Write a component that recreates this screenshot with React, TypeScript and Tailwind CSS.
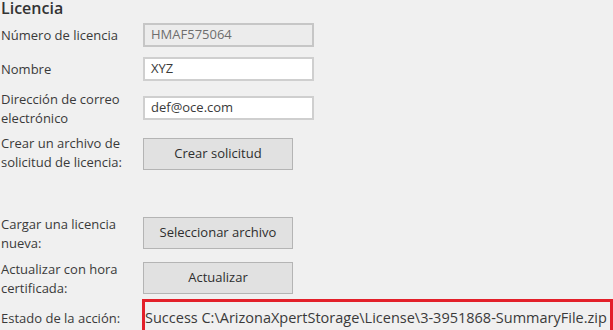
import React from 'react'

const font = { fontFamily: '"Open Sans", "Noto Sans", sans-serif' }

function Label({ lines }: { lines: string[] }) {
  return (
    <div className="w-[143px] shrink-0 pl-px text-[13px] leading-[19px] text-[#3a3a3a]">
      {lines.map((l) => (
        <div key={l}>{l}</div>
      ))}
    </div>
  )
}

function Field({ value, disabled = false }: { value: string; disabled?: boolean }) {
  return (
    <div
      className={[
        'flex h-[24px] w-[171px] items-center px-[6px] text-[13px]',
        'border-2',
        disabled
          ? 'border-[#c6c6c6] bg-[#ececec] text-[#6e6e6e]'
          : 'border-[#cfcfcf] bg-white text-[#3a3a3a]',
      ].join(' ')}
    >
      {value}
    </div>
  )
}

function Btn({ text }: { text: string }) {
  return (
    <div className="flex h-[32px] w-[150px] items-center justify-center border border-[#b4b4b4] bg-[#e1e1e1] text-[13px] text-[#2e2e2e]">
      {text}
    </div>
  )
}

export default function App() {
  return (
    <div className="h-[330px] w-[613px] overflow-hidden bg-[#f0f0f0]" style={font}>
      <div className="h-[23px] pl-px text-[16px] font-semibold leading-[16px] text-[#333333]">
        Licencia
      </div>

      {/* número */}
      <div className="flex h-[24px] items-center">
        <Label lines={['Número de licencia']} />
        <Field value="HMAF575064" disabled />
      </div>

      {/* nombre */}
      <div className="mt-[10px] flex h-[24px] items-center">
        <Label lines={['Nombre']} />
        <Field value="XYZ" />
      </div>

      {/* correo */}
      <div className="mt-[9px] flex items-start">
        <Label lines={['Dirección de correo', 'electrónico']} />
        <div className="mt-[6px]">
          <Field value="def@oce.com" />
        </div>
      </div>

      {/* crear solicitud */}
      <div className="mt-[6px] flex items-start">
        <Label lines={['Crear un archivo de', 'solicitud de licencia:']} />
        <div className="mt-[4px]">
          <Btn text="Crear solicitud" />
        </div>
      </div>

      {/* cargar */}
      <div className="mt-[43px] flex items-start">
        <Label lines={['Cargar una licencia', 'nueva:']} />
        <div className="mt-[2px]">
          <Btn text="Seleccionar archivo" />
        </div>
      </div>

      {/* actualizar */}
      <div className="mt-[7px] flex items-start">
        <Label lines={['Actualizar con hora', 'certificada:']} />
        <div className="mt-[2px]">
          <Btn text="Actualizar" />
        </div>
      </div>

      {/* estado */}
      <div className="mt-[1px] flex h-[38px] items-center">
        <div className="w-[142px] shrink-0 pl-px text-[13px] leading-[19px] text-[#3a3a3a]">
          Estado de la acción:
        </div>
        <div className="flex h-[38px] w-[471px] shrink-0 items-center border-[3px] border-[#e3202a] text-[#3a3a3a]">
          <span className="whitespace-nowrap text-[14.5px] leading-[20px]">
            Success C:\ArizonaXpertStorage\License\3-3951868-SummaryFile.zip
          </span>
        </div>
      </div>
    </div>
  )
}
